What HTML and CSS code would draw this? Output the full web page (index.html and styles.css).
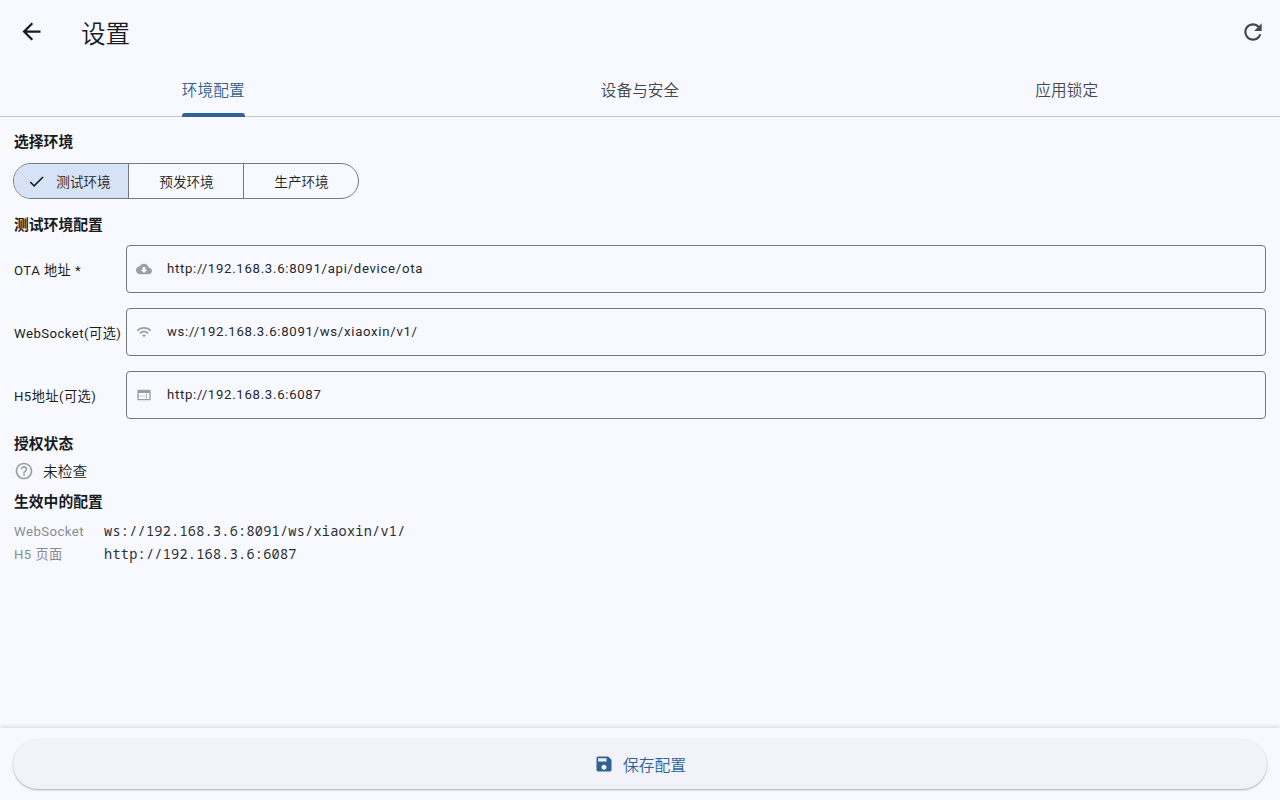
FILE: index.html
```html
<!DOCTYPE html>
<html lang="zh-CN">
  <head>
    <title>设置</title>
    <meta charset="utf-8">
    <link rel="stylesheet" href="styles.css">
  </head>
  <body>

  <header class="appbar">
    <svg class="icon back" viewBox="0 0 24 24"><path d="M20 11H7.83l5.59-5.59L12 4l-8 8 8 8 1.41-1.41L7.83 13H20v-2z"/></svg>
    <h1>设置</h1>
    <svg class="icon refresh" viewBox="0 0 24 24"><path d="M17.65 6.35C16.2 4.9 14.21 4 12 4c-4.42 0-7.99 3.58-7.99 8s3.57 8 7.99 8c3.73 0 6.84-2.55 7.73-6h-2.08c-.82 2.33-3.04 4-5.65 4-3.31 0-6-2.69-6-6s2.69-6 6-6c1.66 0 3.14.69 4.22 1.78L13 11h7V4l-2.35 2.35z"/></svg>
  </header>

  <nav class="tabs">
    <a class="tab active"><span>环境配置</span></a>
    <a class="tab"><span>设备与安全</span></a>
    <a class="tab"><span>应用锁定</span></a>
  </nav>

  <main>
    <h2>选择环境</h2>
    <div class="segments">
      <div class="segment selected">
        <svg class="icon" viewBox="0 0 24 24"><path d="M9 16.17L4.83 12l-1.42 1.41L9 19 21 7l-1.41-1.41z"/></svg>
        <span>测试环境</span>
      </div>
      <div class="segment"><span>预发环境</span></div>
      <div class="segment"><span>生产环境</span></div>
    </div>

    <h2 class="config-title">测试环境配置</h2>
    <div class="field">
      <label>OTA 地址 *</label>
      <div class="input">
        <svg class="icon" viewBox="0 0 24 24"><path d="M19.35 10.04C18.67 6.59 15.64 4 12 4 9.11 4 6.6 5.64 5.35 8.04 2.34 8.36 0 10.91 0 14c0 3.31 2.69 6 6 6h13c2.76 0 5-2.24 5-5 0-2.64-2.05-4.78-4.65-4.96zM17 13l-5 5-5-5h3V9h4v4h3z"/></svg>
        <span>http://192.168.3.6:8091/api/device/ota</span>
      </div>
    </div>
    <div class="field">
      <label>WebSocket(可选)</label>
      <div class="input">
        <svg class="icon" viewBox="0 0 24 24"><path d="M1 9l2 2c4.97-4.97 13.03-4.97 18 0l2-2C16.93 2.93 7.08 2.93 1 9zm8 8l3 3 3-3c-1.65-1.66-4.34-1.66-6 0zm-4-4l2 2c2.76-2.76 7.24-2.76 10 0l2-2C15.14 9.14 8.87 9.14 5 13z"/></svg>
        <span>ws://192.168.3.6:8091/ws/xiaoxin/v1/</span>
      </div>
    </div>
    <div class="field">
      <label>H5地址(可选)</label>
      <div class="input">
        <svg class="icon" viewBox="0 0 24 24"><path d="M20 4H4c-1.1 0-1.99.9-1.99 2L2 18c0 1.1.9 2 2 2h16c1.1 0 2-.9 2-2V6c0-1.1-.9-2-2-2zm-5 14H4v-4h11v4zm0-5H4V9h11v4zm5 5h-4V9h4v9z"/></svg>
        <span>http://192.168.3.6:6087</span>
      </div>
    </div>

    <h2 class="auth-title">授权状态</h2>
    <div class="status">
      <svg class="icon" viewBox="0 0 24 24"><path d="M11 18h2v-2h-2v2zm1-16C6.48 2 2 6.48 2 12s4.48 10 10 10 10-4.48 10-10S17.52 2 12 2zm0 18c-4.41 0-8-3.59-8-8s3.59-8 8-8 8 3.59 8 8-3.59 8-8 8zm0-14c-2.21 0-4 1.79-4 4h2c0-1.1.9-2 2-2s2 .9 2 2c0 2-3 1.75-3 5h2c0-2.25 3-2.5 3-5 0-2.21-1.79-4-4-4z"/></svg>
      <span>未检查</span>
    </div>

    <h2>生效中的配置</h2>
    <dl class="effective">
      <dt>WebSocket</dt>
      <dd>ws://192.168.3.6:8091/ws/xiaoxin/v1/</dd>
      <dt>H5 页面</dt>
      <dd>http://192.168.3.6:6087</dd>
    </dl>
  </main>

  <footer>
    <button class="save">
      <svg class="icon" viewBox="0 0 24 24"><path d="M17 3H5c-1.11 0-2 .9-2 2v14c0 1.1.89 2 2 2h14c1.1 0 2-.9 2-2V7l-4-4zm-5 16c-1.66 0-3-1.34-3-3s1.34-3 3-3 3 1.34 3 3-1.34 3-3 3zm3-10H5V5h10v4z"/></svg>
      <span>保存配置</span>
    </button>
  </footer>

  </body>
</html>
```
FILE: styles.css
```css
* {
  box-sizing: border-box;
}
body {
  margin: 0;
  height: 800px;
  display: flex;
  flex-direction: column;
  overflow: hidden;
  background: #f8f9ff;
  color: #191c20;
  font-family: Roboto, "Noto Sans CJK SC", sans-serif;
  font-size: 13px;
  font-weight: 350;
}

.icon {
  display: block;
  flex: none;
  fill: currentColor;
}

.appbar {
  height: 64px;
  display: flex;
  align-items: center;
  padding: 0 14px 1px 18px;
}
.back {
  width: 27px;
  height: 27px;
}
.refresh {
  width: 26px;
  height: 26px;
  margin-left: auto;
  color: #43474e;
}
h1 {
  margin: 6px 0 0 36px;
  font-size: 24.6px;
  font-weight: 350;
  line-height: 36px;
}

.tabs {
  height: 53px;
  display: flex;
  border-bottom: 1px solid #c3c6cf;
}
.tab {
  flex: 1;
  height: 53px;
  display: flex;
  flex-direction: column;
  align-items: center;
  color: #43474e;
  font-size: 15.6px;
  line-height: 54px;
  letter-spacing: 0.15px;
}
.tab.active {
  color: #2f6195;
}
/* indicator sits on the divider */
.active::after {
  content: "";
  width: 63px;
  height: 4px;
  margin-top: -5px;
  border-radius: 3px 3px 0 0;
  background: #2f6195;
}

main {
  flex: 1;
  padding: 14px 14px 0;
}
h2 {
  margin: 0;
  font-size: 14.8px;
  font-weight: 600;
  line-height: 22px;
}

.segments {
  width: 346px;
  height: 36px;
  margin: 10px 0 0 -1px;
  display: flex;
  border: 1px solid #73777f;
  border-radius: 18px;
  overflow: hidden;
}
.segment {
  flex: none;
  width: 115px;
  display: flex;
  align-items: center;
  justify-content: center;
  gap: 10px;
  padding-left: 1px;
  font-size: 13.6px;
}
.segment + .segment {
  border-left: 1px solid #73777f;
}
.segment.selected {
  width: 114px;
  padding: 0 4px 0 0;
  background: #d6e3f7;
}
.segment .icon {
  width: 19px;
  height: 19px;
}

.config-title {
  margin: 15px 0 9px;
}
.field {
  height: 48px;
  margin-bottom: 15px;
  display: flex;
  align-items: center;
}
.field label {
  width: 112px;
  padding-top: 1px;
  font-size: 13.2px;
  font-weight: 400;
  letter-spacing: 0.45px;
  white-space: nowrap;
}
.input {
  flex: 1;
  height: 48px;
  display: flex;
  align-items: center;
  gap: 15px;
  padding-left: 9px;
  border: 1px solid #73777f;
  border-radius: 4px;
  color: #25282c;
  font-size: 13.2px;
  font-weight: 400;
  letter-spacing: 0.7px;
}
.input .icon {
  width: 16px;
  height: 16px;
  color: #9e9e9e;
}
.input span {
  padding-bottom: 2px;
}

.auth-title {
  margin-top: -1px;
}
.status {
  height: 20px;
  margin: 6px 0 10px;
  display: flex;
  align-items: center;
  gap: 9px;
  font-size: 14.7px;
}
.status span {
  margin-top: -2px;
}
.status .icon {
  width: 20px;
  height: 20px;
  color: #9e9e9e;
}

.effective {
  margin: 7px 0 0;
  display: grid;
  grid-template-columns: 90px 1fr;
  grid-auto-rows: 23px;
  line-height: 23px;
}
dt {
  color: #8a8b8f;
  font-size: 13.2px;
  font-weight: 400;
  letter-spacing: 0.45px;
}
dd {
  margin: 0;
  color: #2b2e32;
  font-family: "Droid Sans Mono", "Noto Sans Mono", "Liberation Mono", monospace;
  font-size: 13.6px;
  font-weight: 400;
  line-height: 21px;
  letter-spacing: 0.22px;
}

footer {
  height: 72px;
  padding: 11px 13px;
  background: #f8f9ff;
  box-shadow: 0 -1px 4px rgba(0, 0, 0, 0.14);
}
.save {
  width: 100%;
  height: 50px;
  display: flex;
  align-items: center;
  justify-content: center;
  gap: 9px;
  border: 0;
  border-radius: 25px;
  background: #f1f2fa;
  box-shadow: 0 1px 2px rgba(0, 0, 0, 0.3);
  color: #2f6195;
  font: 350 15.8px Roboto, "Noto Sans CJK SC", sans-serif;
}
.save .icon {
  width: 20px;
  height: 20px;
}
```
